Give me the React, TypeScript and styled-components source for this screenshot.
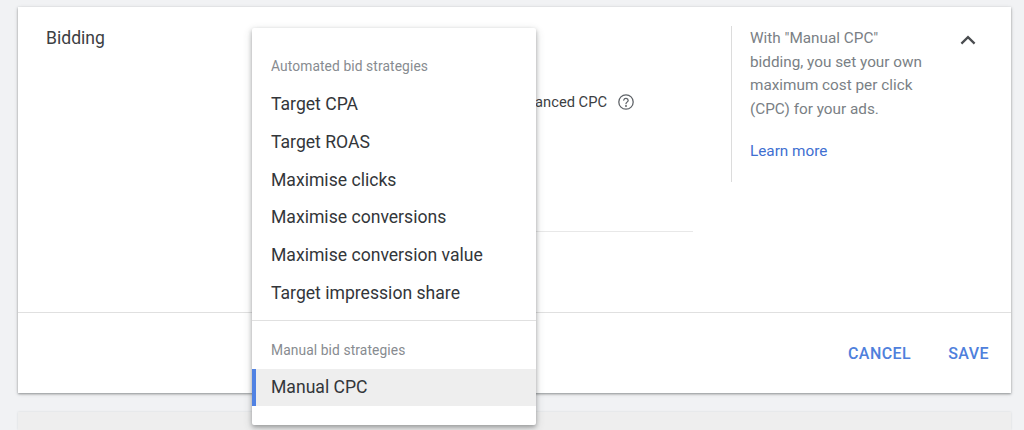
import React from "react";
import styled, { createGlobalStyle } from "styled-components";

const Global = createGlobalStyle`
  html, body { margin: 0; padding: 0; height: 430px; overflow: hidden; background: #f1f2f4; }
  body { font-family: Roboto, "Liberation Sans", sans-serif; -webkit-font-smoothing: antialiased; }
`;

const Page = styled.div`
  width: 1024px;
  height: 430px;
  padding: 7px 13px 0 18px;
  box-sizing: border-box;
  overflow: hidden;
  display: flex;
  flex-direction: column;
  gap: 19px;
`;

const Card = styled.section`
  position: relative;
  flex: none;
  height: 386px;
  background: #fff;
  box-shadow: 0 1px 2px rgba(60, 64, 67, 0.45), 0 1px 4px rgba(60, 64, 67, 0.18);
  display: flex;
  flex-direction: column;
`;

const NextCard = styled.div`
  flex: 1;
  background: #eeeeee;
  box-shadow: 0 0 2px rgba(60, 64, 67, 0.15);
`;

const Body = styled.div`
  flex: none;
  height: 305px;
  display: flex;
  border-bottom: 1px solid #e0e0e0;
`;

const Title = styled.h2`
  flex: none;
  width: 206px;
  margin: 0;
  padding: 21px 0 0 28px;
  font-size: 17.6px;
  line-height: 21px;
  font-weight: 400;
  color: #3c4043;
`;

const Settings = styled.div`
  flex: none;
  width: 441px;
  padding-top: 85px;
  box-sizing: border-box;
`;

const OptionRow = styled.div`
  display: flex;
  align-items: center;
  justify-content: flex-end;
  padding-right: 58px;
  gap: 10px;
  height: 19px;
  font-size: 14.7px;
  color: #3c4043;
`;

const FieldLine = styled.div`
  margin-top: 120px;
  height: 1px;
  background: #e8e8e8;
`;

const Help = styled.aside`
  flex: none;
  width: 209px;
  height: 156px;
  margin: 19px 0 0 38px;
  padding: 1px 0 0 18px;
  border-left: 1px solid #dcdcdc;
  box-sizing: border-box;
  font-size: 15.3px;
  line-height: 23.6px;
  color: #7a7f85;
`;

const HelpText = styled.p`
  margin: 0;
`;

const LearnMore = styled.a`
  display: block;
  margin-top: 18.6px;
  color: #3f6fd1;
  text-decoration: none;
`;

const Chevron = styled.button`
  flex: none;
  width: 18px;
  height: 12px;
  margin: 27px 0 0 19px;
  padding: 0;
  border: 0;
  background: none;
  display: flex;
`;

const Footer = styled.div`
  flex: 1;
  display: flex;
  justify-content: flex-end;
  align-items: flex-start;
  gap: 37px;
  padding: 31px 22px 0 0;
`;

const TextButton = styled.button`
  padding: 0;
  border: 0;
  background: none;
  font-family: inherit;
  font-size: 16px;
  line-height: 19px;
  font-weight: 500;
  letter-spacing: 0.45px;
  color: #4f80dc;
`;

const Menu = styled.div`
  position: absolute;
  left: 234px;
  top: 21px;
  width: 284px;
  height: 397px;
  padding-top: 28px;
  box-sizing: border-box;
  background: #fff;
  border-radius: 2px;
  box-shadow: 0 2px 4px rgba(60, 64, 67, 0.38), 0 3px 10px rgba(60, 64, 67, 0.2);
`;

const GroupLabel = styled.div`
  height: 20px;
  padding-left: 19px;
  font-size: 13.8px;
  line-height: 20px;
  letter-spacing: 0.1px;
  color: #878b90;
`;

const Item = styled.div<{ $selected?: boolean }>`
  height: 37.75px;
  padding-left: ${(p) => (p.$selected ? 15 : 19)}px;
  border-left: ${(p) => (p.$selected ? "4px solid #5082e3" : "0")};
  background: ${(p) => (p.$selected ? "#eeeeee" : "transparent")};
  font-size: 17.6px;
  line-height: 37.75px;
  color: #33363a;
`;

const ItemList = styled.div`
  margin-top: 10px;
`;

const Divider = styled.div`
  height: 1px;
  margin-top: 7.5px;
  margin-bottom: 18.5px;
  background: #e0e0e0;
`;

const SelectedList = styled.div`
  margin-top: 9px;
`;

const automated = [
  "Target CPA",
  "Target ROAS",
  "Maximise clicks",
  "Maximise conversions",
  "Maximise conversion value",
  "Target impression share",
];

export default function App() {
  return (
    <Page>
      <Global />
      <Card>
        <Body>
          <Title>Bidding</Title>
          <Settings>
            <OptionRow>
              <span>Enhanced CPC</span>
              <svg width="18" height="18" viewBox="0 0 24 24" fill="none" stroke="#5f6368" strokeWidth="1.7" strokeLinecap="round" strokeLinejoin="round">
                <circle cx="12" cy="12" r="9.6" />
                <path d="M9 9.4a3 3 0 0 1 5.9.6c0 1.9-2.9 2.4-2.9 4.2" />
                <circle cx="12" cy="17.3" r="0.5" fill="#5f6368" />
              </svg>
            </OptionRow>
            <FieldLine />
          </Settings>
          <Help>
            <HelpText>
              With "Manual CPC"
              <br />
              bidding, you set your own
              <br />
              maximum cost per click
              <br />
              (CPC) for your ads.
            </HelpText>
            <LearnMore>Learn more</LearnMore>
          </Help>
          <Chevron aria-label="Collapse">
            <svg width="18" height="12" viewBox="0 0 18 12" fill="none" stroke="#4a4d50" strokeWidth="2.3">
              <path d="M2.4 9.6 9 3.2l6.6 6.4" />
            </svg>
          </Chevron>
        </Body>
        <Footer>
          <TextButton>CANCEL</TextButton>
          <TextButton>SAVE</TextButton>
        </Footer>
        <Menu>
          <GroupLabel>Automated bid strategies</GroupLabel>
          <ItemList>
            {automated.map((label) => (
              <Item key={label}>{label}</Item>
            ))}
          </ItemList>
          <Divider />
          <GroupLabel>Manual bid strategies</GroupLabel>
          <SelectedList>
            <Item $selected>Manual CPC</Item>
          </SelectedList>
        </Menu>
      </Card>
      <NextCard />
    </Page>
  );
}
